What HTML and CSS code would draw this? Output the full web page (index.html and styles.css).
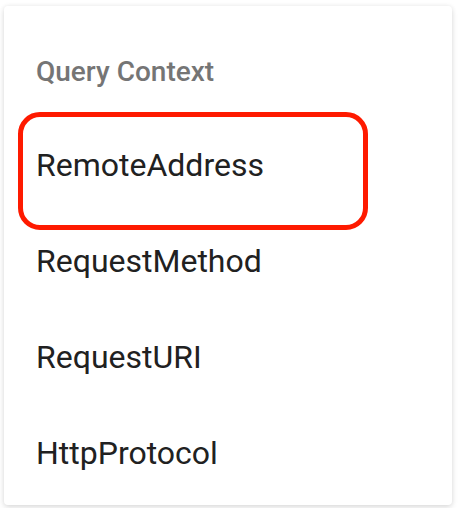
FILE: index.html
```html
<!DOCTYPE html>
<html>
<head>
<meta charset="utf-8">
<link rel="stylesheet" href="styles.css">
</head>
<body>
<div class="menu">
  <ul class="list">
    <li class="subheader">Query Context</li>
    <li class="item">RemoteAddress</li>
    <li class="item">RequestMethod</li>
    <li class="item">RequestURI</li>
    <li class="item">HttpProtocol</li>
  </ul>
  <div class="highlight"></div>
</div>
</body>
</html>
```
FILE: styles.css
```css
html, body {
  margin: 0;
  padding: 0;
  background: #ffffff;
}
body {
  padding: 6px 8px 3px 4px;
  font-family: Roboto, "Noto Sans", "Liberation Sans", sans-serif;
}
.menu {
  position: relative;
  width: 448px;
  height: 499px;
  background: #ffffff;
  border-radius: 4px;
  overflow: hidden;
  box-shadow: 0 3px 6px rgba(0, 0, 0, 0.10), 0 0 5px rgba(0, 0, 0, 0.08);
}
.list {
  list-style: none;
  margin: 0;
  padding: 20px 0 0 0;
}
.subheader {
  padding: 0 32px;
  font-size: 28px;
  font-weight: 500;
  line-height: 91px;
  color: #757575;
}
.item {
  display: flex;
  align-items: center;
  height: 96px;
  padding: 0 32px;
  font-size: 32px;
  line-height: 48px;
  color: #212121;
}
.highlight {
  position: absolute;
  left: 13.5px;
  top: 106px;
  width: 350px;
  height: 118px;
  box-sizing: border-box;
  border: 5px solid #fe1a00;
  border-radius: 22px;
}
```
